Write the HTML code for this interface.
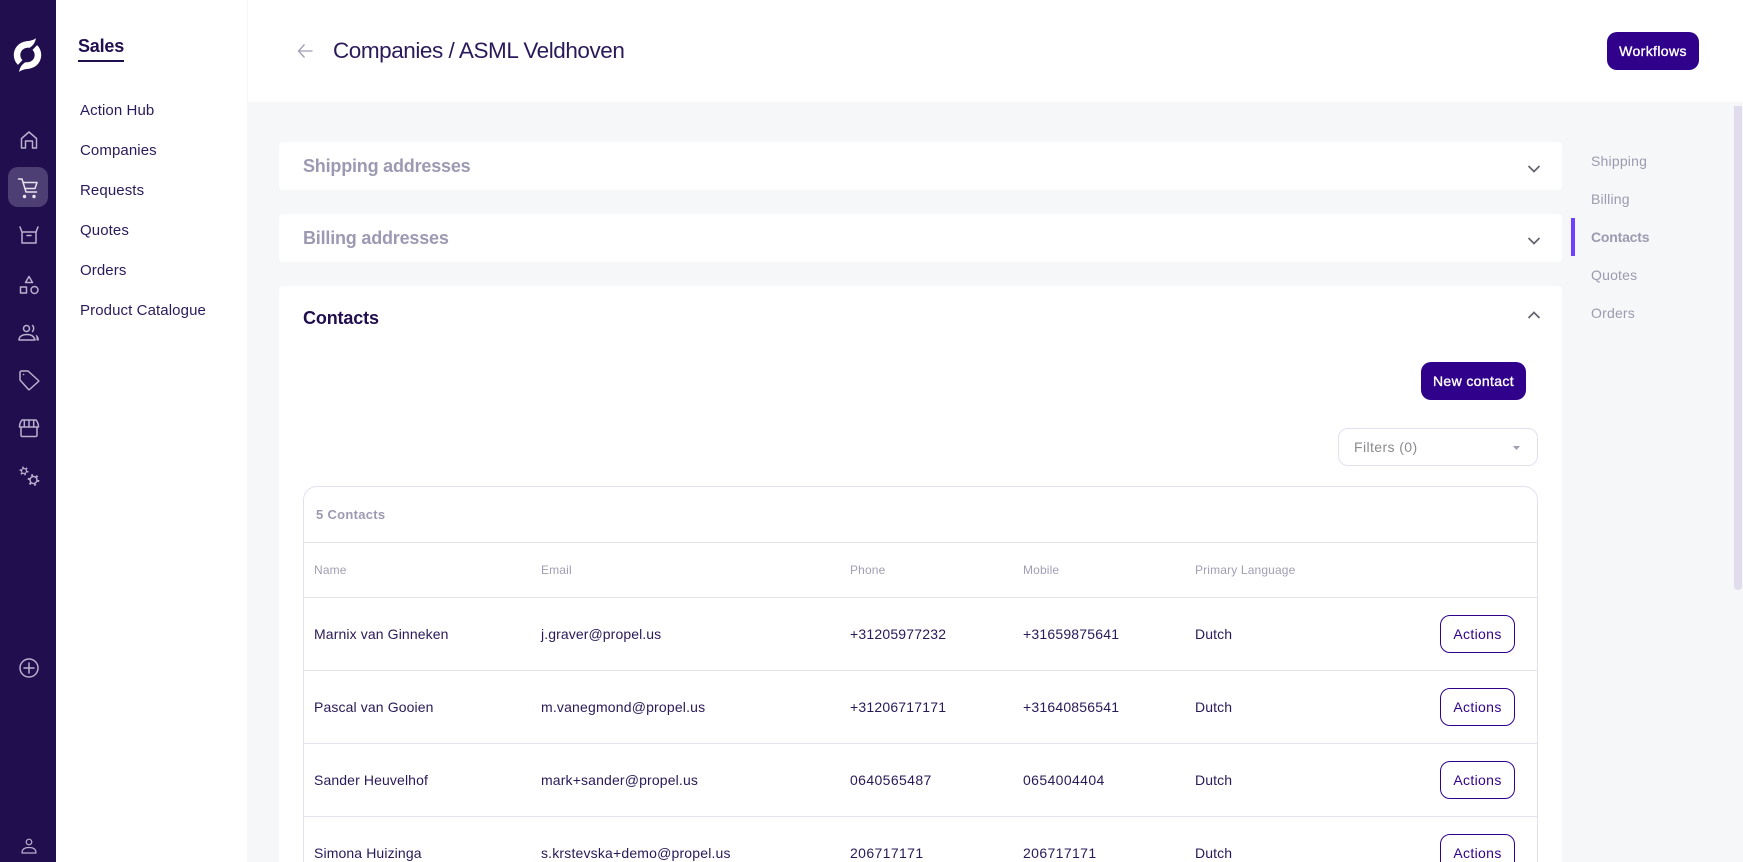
<!DOCTYPE html>
<html><head><meta charset="utf-8"><style>
html,body{margin:0;padding:0;width:1743px;height:862px;overflow:hidden;background:#f6f7f9;font-family:"Liberation Sans",Arial,sans-serif;color:#210e4f}
#w{position:relative;width:1743px;height:862px;overflow:hidden;background:#f6f7f9}
.a,.t{position:absolute}
.t{white-space:nowrap;line-height:20px;height:20px}
.nav{left:80px;font-size:15px;letter-spacing:.1px;color:#2b1a5a}
.rn{left:1591px;font-size:14px;letter-spacing:.2px;color:#9c9ab0}
.sec{left:303px;font-size:18px;font-weight:bold;letter-spacing:-.2px;color:#9c9ab2}
.th{font-size:12px;letter-spacing:.15px;color:#a09eb3}
.td{font-size:14px;letter-spacing:.12px;color:#2a1958}
.em{letter-spacing:.18px}
.ph{letter-spacing:.2px}
.dg{letter-spacing:.38px}
.btn{position:absolute;background:#30028c;color:#fff;border-radius:10px;font-size:14px;-webkit-text-stroke:.35px #fff;letter-spacing:.37px;text-align:center;line-height:38px;height:38px}
.act{position:absolute;left:1440px;width:73px;height:36px;border:1px solid #30028c;border-radius:10px;background:#fff;color:#30028c;font-size:14px;letter-spacing:.35px;text-align:center;line-height:36px}
.ln{position:absolute;left:304px;width:1233px;height:1px;background:#e6e4ef}
svg{position:absolute;overflow:visible}
.ic{fill:none;stroke:#b9b0cd;stroke-width:1.5;stroke-linejoin:round;stroke-linecap:round}
.g{stroke-linecap:butt}
</style></head><body><div id="w">
<div class="a" style="left:0;top:0;width:56px;height:862px;background:#210e4f"></div>
<div class="a" style="left:56px;top:0;width:191px;height:862px;background:#fff"></div>
<div class="a" style="left:247px;top:0;width:1496px;height:102px;background:#fff;border-left:1px solid #f6f6f8"></div>

<svg style="left:0;top:0" width="56" height="862">
<path d="M29 44.600A10.500 10.500 0 0 0 20.200 62.500M26 65.400A10.500 10.500 0 0 0 34.800 47.500" fill="none" stroke="#fff" stroke-width="6.500"/>
<path d="M26 41.300C30 41 34 40 36 38C35 43 33 46 29 48ZM29 68.700C25 69 21 70 19 72C20 67 22 64 26 62Z" fill="#fff"/>
<rect x="8" y="167" width="40" height="40" rx="10" fill="#4d3f73"/>
<path class="ic" d="M21.500 148V138.500L29 132L36.500 138.500V148H32.500V141H25.500V148Z"/>
<path class="ic" style="stroke:#e6e2ef" d="M18.500 179H22L26 192H36.500M23 182.500H37L35 188.500H25"/>
<circle cx="24.500" cy="196.500" r="1.700" fill="#e6e2ef"/><circle cx="34" cy="196.500" r="1.700" fill="#e6e2ef"/>
<path class="ic" d="M20 227L22 232V243H36V232L38 227M22 232H36M27 235.500H31"/>
<path class="ic" d="M29 276.500L32.500 282.500H25.500ZM20.500 287H26.500V293H20.500ZM38 290A3.500 3.500 0 1 1 31 290A3.500 3.500 0 1 1 38 290Z"/>
<circle class="ic" cx="26.500" cy="328.500" r="3"/><path class="ic" d="M19 340C19 336 23 334.500 27 334.500C31 334.500 34 336 35 340Z"/><path class="ic" d="M32.500 325.500C34 326.500 34 330 32.500 331.500"/><path d="M35.500 334.500C38 335.500 39 338 39 340.500H36.500C36.500 338 36.500 336 35.500 334.500Z" fill="#b9b0cd"/>
<path class="ic" d="M21 371H28L38.500 380.500Q39 381 38.500 381.500L29.500 389.500Q29 390 28.500 389.500L20 380V372ZM23.500 374.500H23.600"/>
<path class="ic" d="M22 420H36Q38.500 423 38.500 427H19.500Q19.500 423 22 420ZM21 427.500V435Q21 436.500 22.500 436.500H35.500Q37 436.500 37 435V427.500M24.300 420.500V427M29 420.500V427M33.700 420.500V427"/>
<circle class="ic g" style="stroke-width:1.600;stroke-dasharray:1.500 2.380" cx="24" cy="471" r="3.700"/><circle class="ic" style="stroke-width:1.200" cx="24" cy="471" r="2.500"/>
<circle class="ic g" style="stroke-width:1.800;stroke-dasharray:2 3.240" cx="33.500" cy="480" r="5"/><circle class="ic" cx="33.500" cy="480" r="3.500"/>
<circle class="ic" cx="29" cy="668" r="9"/><path class="ic" d="M29 663V673M24 668H34"/>
<circle class="ic" style="stroke-width:1.200" cx="29" cy="842" r="2.800"/><path class="ic" style="stroke-width:1.200" d="M22 853C22 849 25 847.500 29 847.500C33 847.500 36 849 36 853Z"/>
</svg>

<div class="t" style="left:78px;top:36px;font-size:18px;font-weight:bold;color:#210e4f;letter-spacing:-.2px">Sales</div>
<div class="a" style="left:78px;top:60px;width:46px;height:2px;background:#210e4f"></div>
<div class="t nav" style="top:101px">Action Hub</div>
<div class="t nav" style="top:141px">Companies</div>
<div class="t nav" style="top:181px">Requests</div>
<div class="t nav" style="top:221px">Quotes</div>
<div class="t nav" style="top:261px">Orders</div>
<div class="t nav" style="top:301px">Product Catalogue</div>

<svg style="left:297px;top:43px" width="17" height="16"><path d="M15.500 8H1.500M7.500 1.500L1.500 8L7.500 14.500" fill="none" stroke="#a09eb3" stroke-width="1.300"/></svg>
<div class="t" style="left:333px;top:41px;font-size:22.500px;letter-spacing:-.45px;color:#2b1a5a">Companies / ASML Veldhoven</div>
<div class="btn" style="left:1607px;top:32px;width:92px">Workflows</div>

<div class="a" style="left:279px;top:142px;width:1283px;height:48px;background:#fff;border-radius:4px"></div>
<div class="a" style="left:279px;top:214px;width:1283px;height:48px;background:#fff;border-radius:4px"></div>
<div class="a" style="left:279px;top:286px;width:1283px;height:576px;background:#fff;border-radius:4px 4px 0 0"></div>
<div class="t sec" style="top:156px">Shipping addresses</div>
<div class="t sec" style="top:228px">Billing addresses</div>
<div class="t sec" style="top:308px;color:#210e4f;letter-spacing:-.15px">Contacts</div>

<div class="t rn" style="top:151px">Shipping</div>
<div class="t rn" style="top:189px">Billing</div>
<div class="t rn" style="top:227px;font-weight:bold;letter-spacing:-.2px">Contacts</div>
<div class="t rn" style="top:265px">Quotes</div>
<div class="t rn" style="top:303px">Orders</div>
<div class="a" style="left:1571px;top:218px;width:4px;height:38px;background:#6e40ff"></div>
<div class="a" style="left:1734px;top:106px;width:8px;height:484px;background:#e0dcec;border-radius:0 0 4px 4px"></div>

<div class="btn" style="left:1421px;top:362px;width:105px">New contact</div>
<div class="a" style="left:1338px;top:428px;width:198px;height:36px;border:1px solid #e3e0f0;border-radius:10px;background:#fff"></div>
<div class="t" style="left:1354px;top:437px;font-size:14px;letter-spacing:.4px;color:#8a8a90">Filters (0)</div>
<svg style="left:0;top:0" width="1743" height="862">
<path d="M1528.500 166L1534 171.500L1539.500 166M1528.500 238L1534 243.500L1539.500 238M1528.500 318L1534 312.500L1539.500 318" fill="none" stroke="#66636f" stroke-width="1.700"/>
<path d="M1513 446H1520L1516.500 450Z" fill="#a09eb3"/>
</svg>

<div class="a" style="left:303px;top:486px;width:1233px;height:400px;border:1px solid #e3e0f0;border-radius:14px"></div>
<div class="t" style="left:316px;top:505px;font-size:13px;font-weight:bold;letter-spacing:.3px;color:#9c9ab2">5 Contacts</div>
<div class="ln" style="top:542px"></div><div class="ln" style="top:597px"></div><div class="ln" style="top:670px"></div><div class="ln" style="top:743px"></div><div class="ln" style="top:816px"></div>
<div class="t th" style="left:314px;top:560px">Name</div>
<div class="t th" style="left:541px;top:560px">Email</div>
<div class="t th" style="left:850px;top:560px">Phone</div>
<div class="t th" style="left:1023px;top:560px">Mobile</div>
<div class="t th" style="left:1195px;top:560px">Primary Language</div>

<div class="t td" style="left:314px;top:624px">Marnix van Ginneken</div>
<div class="t td em" style="left:541px;top:624px;letter-spacing:.1px">j.graver@propel.us</div>
<div class="t td ph" style="left:850px;top:624px">+31205977232</div>
<div class="t td ph" style="left:1023px;top:624px">+31659875641</div>
<div class="t td" style="left:1195px;top:624px">Dutch</div>
<div class="act" style="top:615px">Actions</div>

<div class="t td" style="left:314px;top:697px">Pascal van Gooien</div>
<div class="t td em" style="left:541px;top:697px">m.vanegmond@propel.us</div>
<div class="t td ph" style="left:850px;top:697px">+31206717171</div>
<div class="t td ph" style="left:1023px;top:697px">+31640856541</div>
<div class="t td" style="left:1195px;top:697px">Dutch</div>
<div class="act" style="top:688px">Actions</div>

<div class="t td" style="left:314px;top:770px">Sander Heuvelhof</div>
<div class="t td em" style="left:541px;top:770px;letter-spacing:.15px">mark+sander@propel.us</div>
<div class="t td dg" style="left:850px;top:770px">0640565487</div>
<div class="t td dg" style="left:1023px;top:770px">0654004404</div>
<div class="t td" style="left:1195px;top:770px">Dutch</div>
<div class="act" style="top:761px">Actions</div>

<div class="t td" style="left:314px;top:843px">Simona Huizinga</div>
<div class="t td em" style="left:541px;top:843px">s.krstevska+demo@propel.us</div>
<div class="t td dg" style="left:850px;top:843px">206717171</div>
<div class="t td dg" style="left:1023px;top:843px">206717171</div>
<div class="t td" style="left:1195px;top:843px">Dutch</div>
<div class="act" style="top:834px">Actions</div>
</div></body></html>
